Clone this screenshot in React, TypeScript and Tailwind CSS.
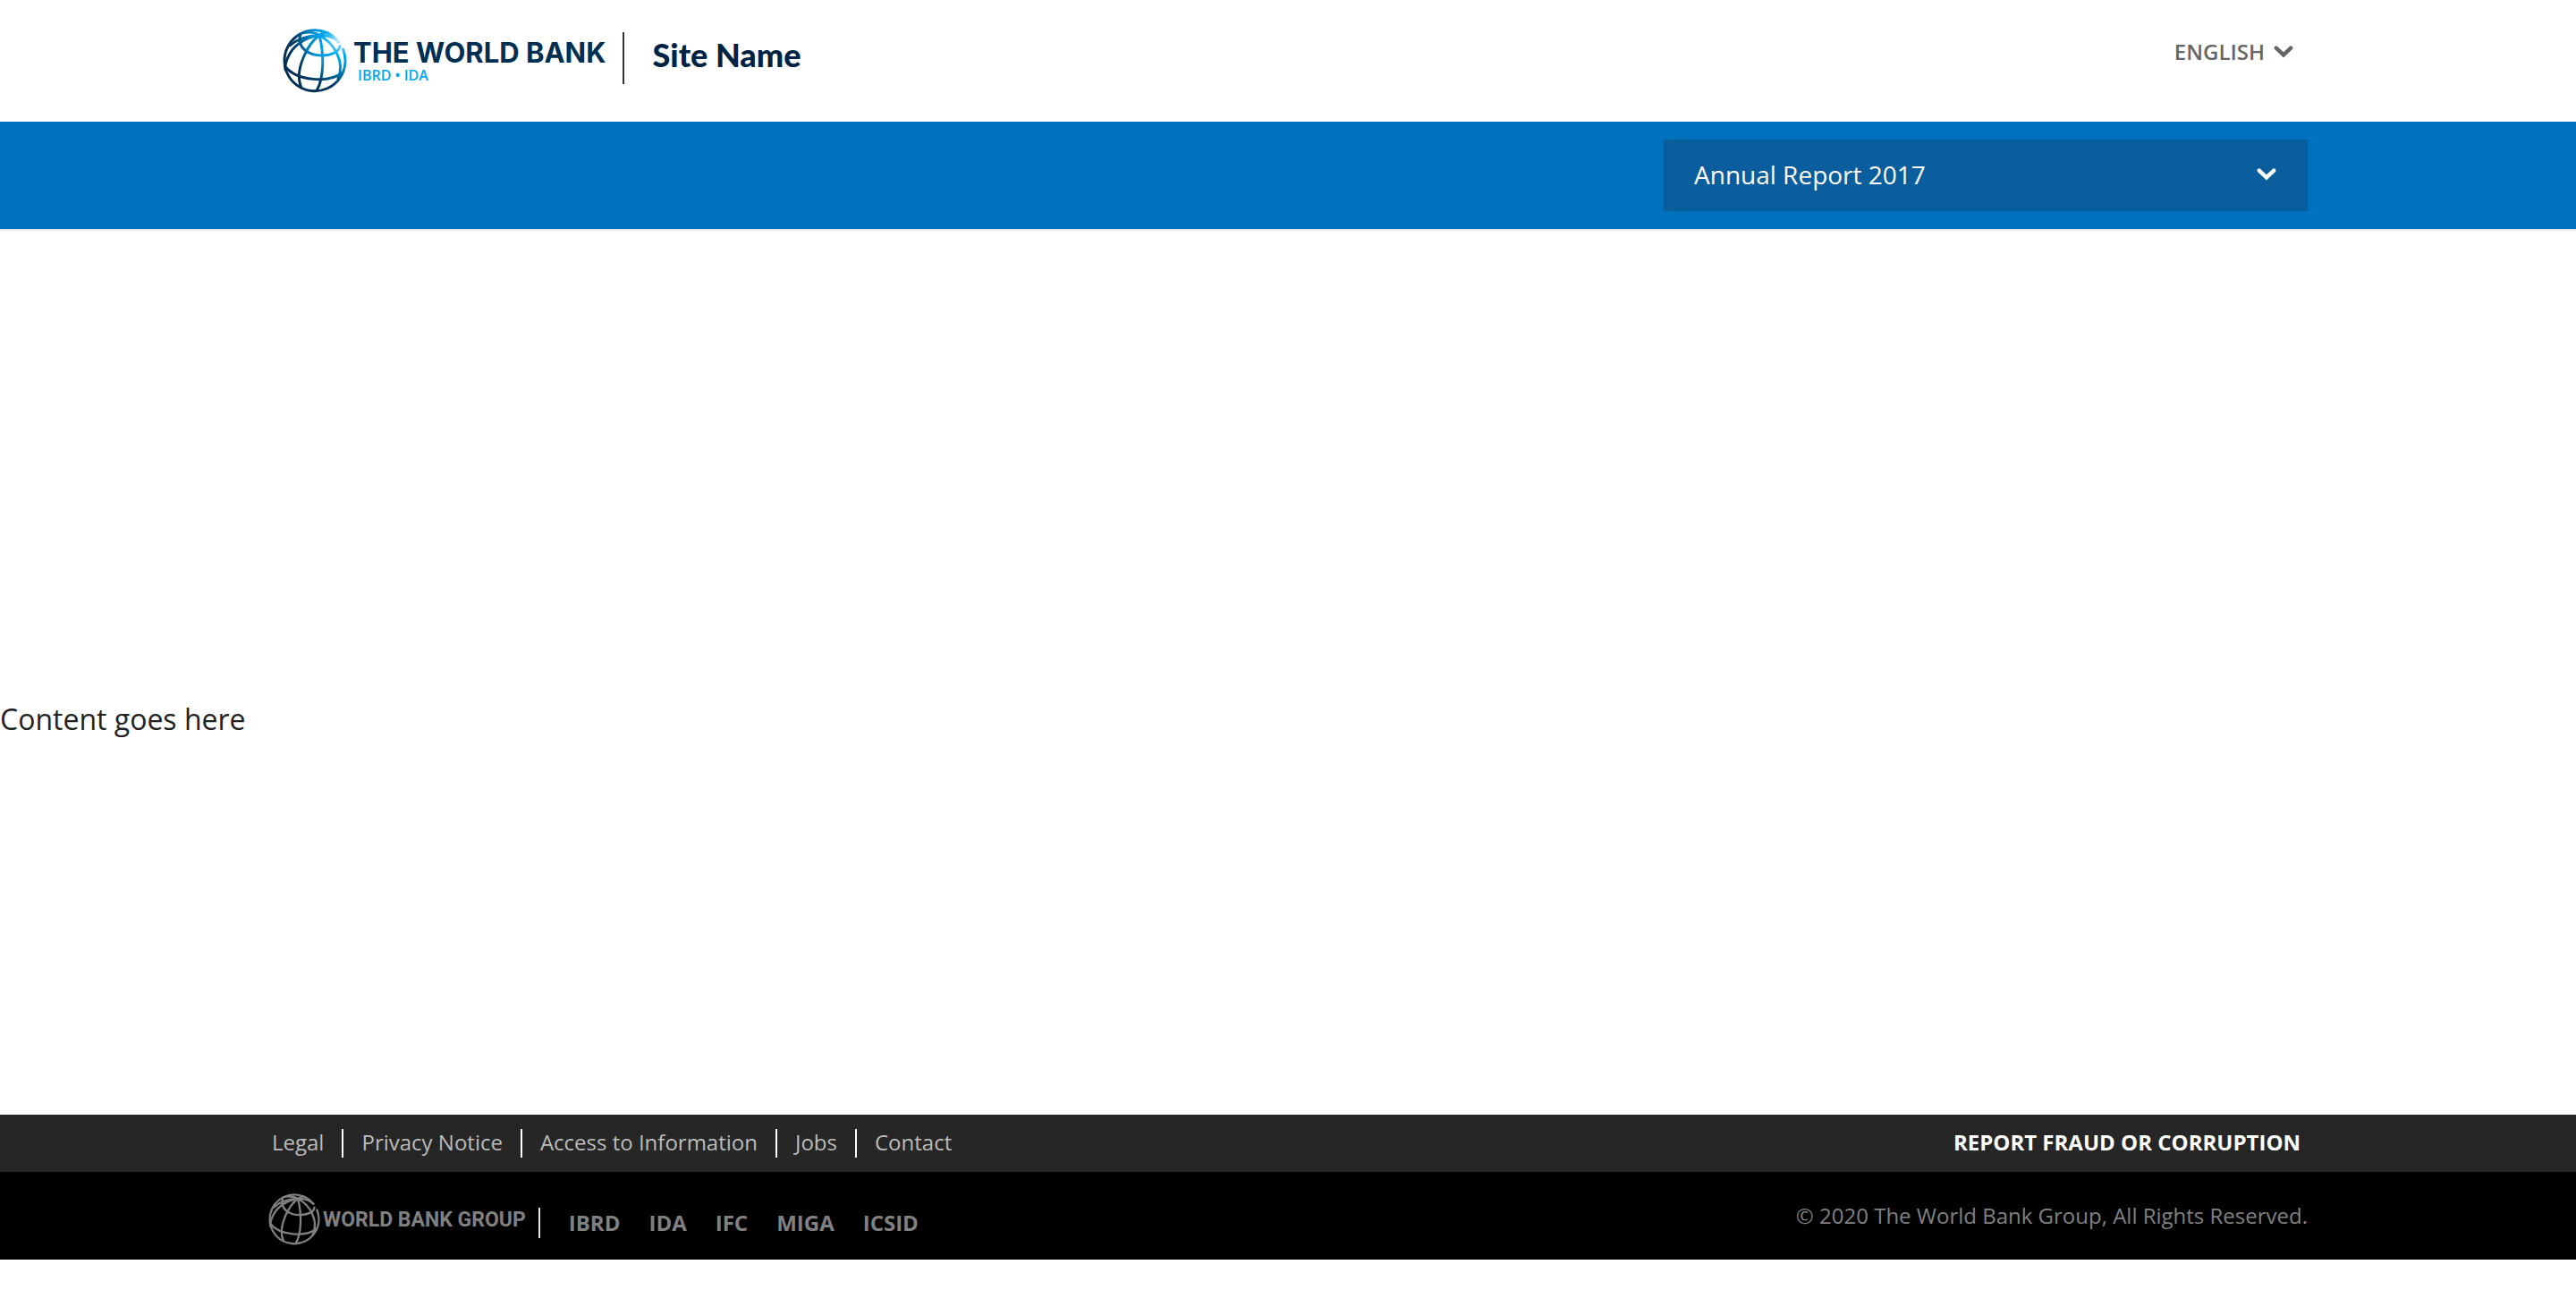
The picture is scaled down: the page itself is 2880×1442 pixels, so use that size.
import { useId } from "react";

const legalLinks = ["Legal", "Privacy Notice", "Access to Information", "Jobs", "Contact"];
const institutions = ["IBRD", "IDA", "IFC", "MIGA", "ICSID"];

function Globe({ className, mono }: { className: string; mono?: boolean }) {
  const id = useId();
  const stroke = mono ? "#808080" : `url(#${id})`;
  return (
    <svg viewBox="0 0 72 72" className={className} fill="none" aria-hidden="true">
      <defs>
        <radialGradient id={id} gradientUnits="userSpaceOnUse" cx="64" cy="12" r="64">
          <stop offset="0" stopColor="#e4f6fe" />
          <stop offset="0.14" stopColor="#5cc8f6" />
          <stop offset="0.28" stopColor="#00a9ef" />
          <stop offset="0.5" stopColor="#0090d0" />
          <stop offset="0.8" stopColor="#003a66" />
          <stop offset="1" stopColor="#002f54" />
        </radialGradient>
      </defs>
      <g stroke={stroke} strokeWidth="2.9" strokeLinecap="round">
        <path d="M62.5 14.5 A34 34 0 1 0 67.5 23" />
        <path d="M41 7.5 C28 9 14 17 8 28 C4 35 2 40 3 46" />
        <path d="M41 7.5 C29 16 12 46 21 66" />
        <path d="M41 7.5 C46 26 47 54 38 69.5" />
        <path d="M41 7.5 C58 16 70 38 62 56" />
        <path d="M41 7.5 C50 7 57 9 62.5 14.5" />
        <path d="M41 7.5 C36 4 31 3.5 24 4.5 M41 7.5 C44 4.5 48 4 51 5" />
        <path d="M20 6 C15 21 29 30 44 30 C54 30 63 26 64 19.5" />
        <path d="M8 19 C16 12 28 8 41 7.5" />
        <path d="M2.5 42 C16 59 52 61 67 49" />
      </g>
    </svg>
  );
}

function Chevron() {
  return (
    <svg viewBox="0 0 22 14" className="h-3.5 w-[22px]" fill="none" stroke="currentColor" strokeWidth="4.4" strokeLinecap="round" aria-hidden="true">
      <path d="M2.8 2.6 L11 10.4 L19.2 2.6" />
    </svg>
  );
}

export default function App() {
  return (
    <div className="flex min-h-screen flex-col bg-white font-['Open_Sans',sans-serif] text-[#222222]">
      <header>
        <div className="mx-auto flex h-[136px] w-full max-w-[2280px] items-start justify-between px-4">
          <div className="flex items-start">
            <a href="#home" className="flex items-start pt-8">
              <Globe className="size-[72px]" />
              <span className="flex flex-col pl-[7px] pt-2.5">
                <span className="font-[Inter,sans-serif] text-[31px] font-bold leading-[34px] text-[#002f54]">THE WORLD BANK</span>
                <span className="pl-[5px] text-base font-semibold leading-4 text-[#00a9ef]">IBRD • IDA</span>
              </span>
            </a>
            <span className="ml-[18px] mt-9 h-[58px] w-0.5 bg-[#333333]" />
            <a href="#site" className="ml-8 mt-9 font-[Lato,sans-serif] text-[36px] font-black leading-[50px] text-[#002244]">Site Name</a>
          </div>
          <button type="button" className="mt-[38px] flex items-center gap-2.5 text-2xl font-semibold leading-10 text-[#666666]">
            ENGLISH
            <Chevron />
          </button>
        </div>
      </header>

      <nav className="border-b-2 border-[#e8e8e8] bg-[#0071bc] py-5">
        <div className="mx-auto flex w-full max-w-[2280px] justify-end">
          <button type="button" className="flex h-20 w-[720px] items-center justify-between bg-[#0a5e9e] pb-0.5 pl-[34px] pr-[35px] text-[28px] leading-10 text-white">
            Annual Report 2017
            <Chevron />
          </button>
        </div>
      </nav>

      <main className="flex flex-1 items-center">
        <p className="pt-[104px] text-[32px] leading-[44px]">Content goes here</p>
      </main>

      <footer className="mb-[34px]">
        <div className="bg-[#262626]">
          <div className="mx-auto flex h-16 w-full max-w-[2280px] items-center justify-between pl-1 pr-2">
            <ul className="flex items-center text-2xl leading-[30px] text-[#bbbbbb]">
              {legalLinks.map((label, i) => (
                <li key={label} className={i === 0 ? "pb-0.5 pr-5" : "border-l-2 border-white px-5 pb-0.5"}>
                  <a href="#legal">{label}</a>
                </li>
              ))}
            </ul>
            <a href="#report" className="pb-0.5 text-2xl font-bold leading-[30px] text-white">REPORT FRAUD OR CORRUPTION</a>
          </div>
        </div>
        <div className="bg-black">
          <div className="mx-auto flex h-[98px] w-full max-w-[2280px] items-center justify-between text-2xl text-[#808080]">
            <div className="flex items-center pt-2">
              <a href="#group" className="flex items-center gap-[3px]">
                <Globe className="size-[58px]" mono />
                <span className="pt-0.5 font-[Roboto,sans-serif] text-[23px] font-bold leading-8">WORLD BANK GROUP</span>
              </a>
              <span className="ml-3.5 mt-2 h-[34px] w-0.5 bg-[#e5e5e5]" />
              <ul className="ml-8 mt-2 flex gap-8 font-bold leading-8">
                {institutions.map((label) => (
                  <li key={label}>
                    <a href="#institution">{label}</a>
                  </li>
                ))}
              </ul>
            </div>
            <p className="leading-8">© 2020 The World Bank Group, All Rights Reserved.</p>
          </div>
        </div>
      </footer>
    </div>
  );
}
